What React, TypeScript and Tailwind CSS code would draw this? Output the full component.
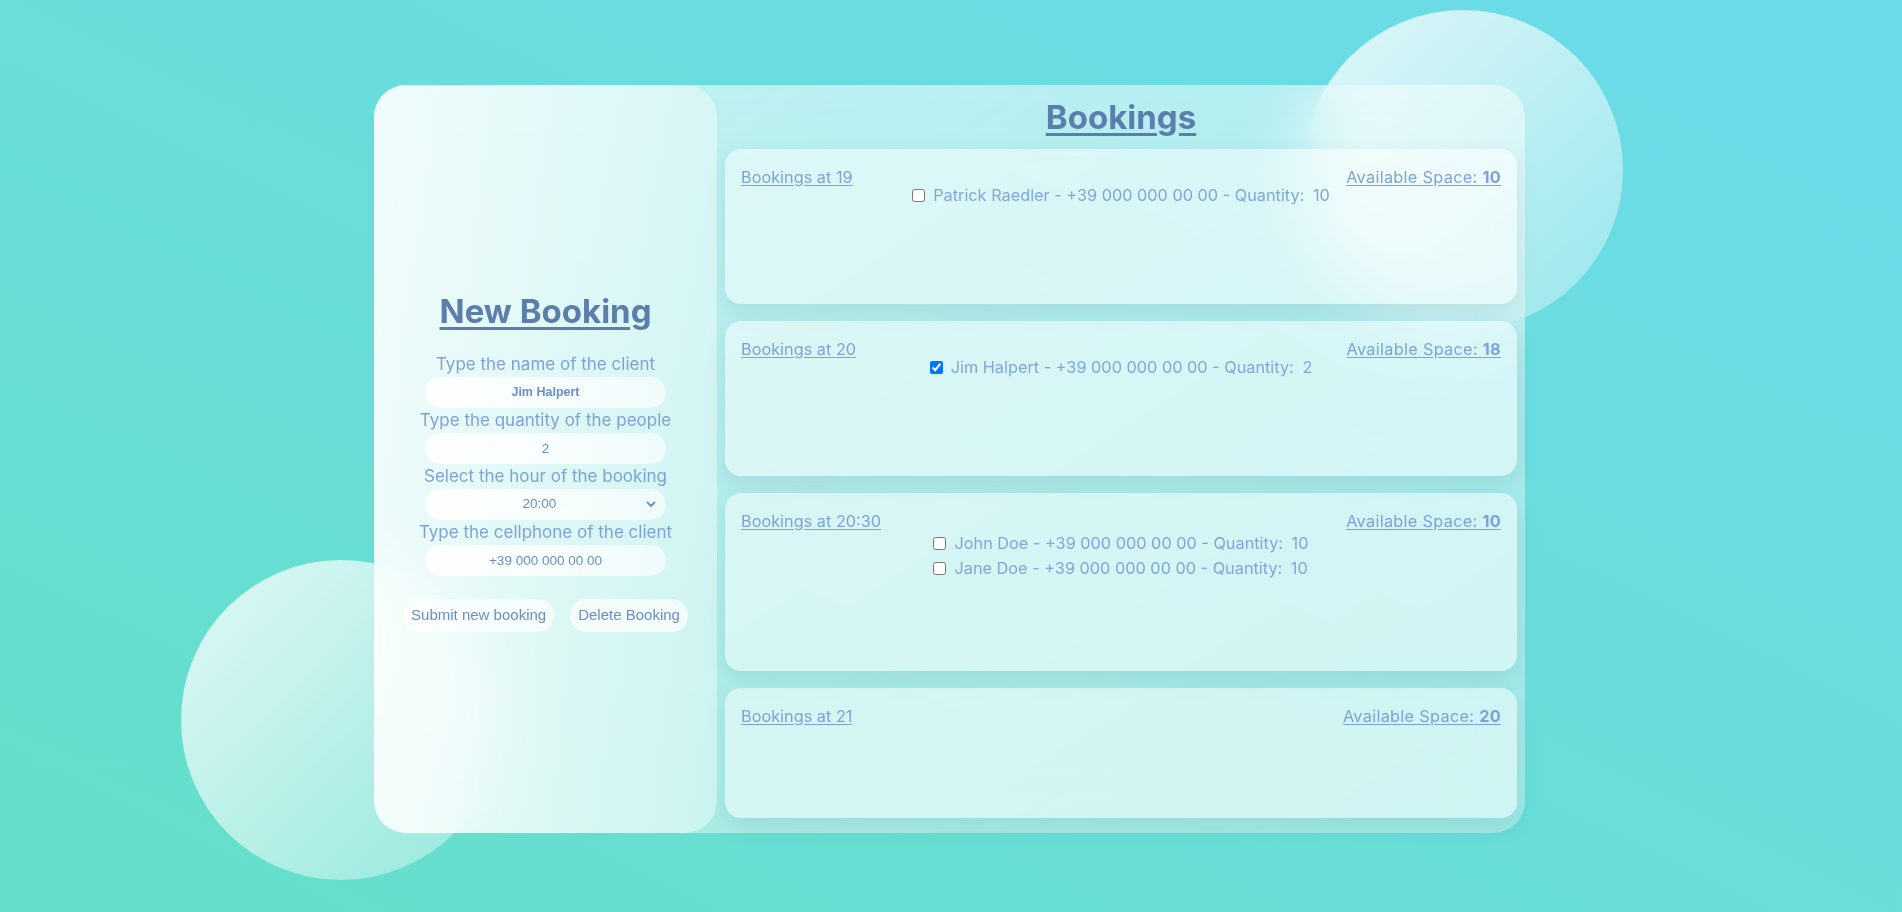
import React from "react";

type Item = { name: string; qty: number; checked: boolean };
type Slot = { hour: string; space: number; items: Item[] };

const slots: Slot[] = [
  { hour: "19", space: 10, items: [{ name: "Patrick Raedler", qty: 10, checked: false }] },
  { hour: "20", space: 18, items: [{ name: "Jim Halpert", qty: 2, checked: true }] },
  {
    hour: "20:30",
    space: 10,
    items: [
      { name: "John Doe", qty: 10, checked: false },
      { name: "Jane Doe", qty: 10, checked: false },
    ],
  },
  { hour: "21", space: 20, items: [] },
];

const poppins = "font-['Inter',sans-serif]";

function Field({ label, children }: { label: string; children: React.ReactNode }) {
  return (
    <div className="flex flex-col items-center">
      <div className="text-[17px] leading-[25px] text-[#7ea2d5] whitespace-nowrap">{label}</div>
      {children}
    </div>
  );
}

const inputCls =
  "w-[241px] h-[31px] rounded-full bg-linear-to-r from-[rgba(255,255,255,0.95)] to-[rgba(255,255,255,0.6)] text-center text-[#6a8ec6] font-['Liberation_Sans',Arial,sans-serif] outline-none border-0";

export default function App() {
  return (
    <div
      className={`relative w-full h-[912px] overflow-hidden bg-linear-to-tr from-[#65dfc9] to-[#6cdbeb] ${poppins}`}
    >
      <div className="absolute left-[1303px] top-[10px] w-[320px] h-[320px] rounded-full bg-linear-to-br from-[rgba(255,255,255,0.8)] to-[rgba(255,255,255,0.3)]" />
      <div className="absolute left-[181px] top-[560px] w-[320px] h-[320px] rounded-full bg-linear-to-br from-[rgba(255,255,255,0.8)] to-[rgba(255,255,255,0.3)]" />

      <div className="relative z-10 flex pl-[374px] pt-[85px]">
        <div className="flex w-[1151px] h-[748px] rounded-[32px] bg-linear-to-br from-[rgba(255,255,255,0.6)] to-[rgba(255,255,255,0.35)] backdrop-blur-[32px]">
          {/* Left panel */}
          <div className="w-[343px] h-full rounded-[32px] bg-linear-to-r from-[rgba(255,255,255,0.75)] to-[rgba(255,255,255,0.4)] flex flex-col items-center justify-center">
            <h1 className="text-[33px] leading-[48px] font-bold text-[#5b7eab] underline decoration-[3px] underline-offset-[4px]">
              New Booking
            </h1>
            <div className="mt-[17px] flex flex-col items-center">
              <Field label="Type the name of the client">
                <input className={`${inputCls} text-[12.5px] font-bold`} defaultValue="Jim Halpert" />
              </Field>
              <Field label="Type the quantity of the people">
                <input className={`${inputCls} text-[13.5px]`} defaultValue="2" />
              </Field>
              <Field label="Select the hour of the booking">
                <div className="relative">
                  <select className={`${inputCls} text-[13.5px] appearance-none pl-[8px] pr-[20px]`} defaultValue="20:00">
                    <option>19:00</option>
                    <option>20:00</option>
                    <option>20:30</option>
                    <option>21:00</option>
                  </select>
                  <svg
                    className="absolute right-[10px] top-[12px] pointer-events-none"
                    width="10"
                    height="7"
                    viewBox="0 0 10 7"
                    fill="none"
                  >
                    <path d="M1.5 1.5 L5 5 L8.5 1.5" stroke="#6a8ec6" strokeWidth="1.8" strokeLinecap="round" strokeLinejoin="round" />
                  </svg>
                </div>
              </Field>
              <Field label="Type the cellphone of the client">
                <input className={`${inputCls} text-[13.5px]`} defaultValue="+39 000 000 00 00" />
              </Field>
            </div>
            <div className="mt-[23px] flex gap-[16px]">
              <button className="h-[33px] px-[8px] rounded-full bg-[rgba(255,255,255,0.7)] text-[15px] text-[#6a8ec6] font-['Liberation_Sans',Arial,sans-serif]">
                Submit new booking
              </button>
              <button className="h-[33px] px-[8px] rounded-full bg-[rgba(255,255,255,0.7)] text-[15px] text-[#6a8ec6] font-['Liberation_Sans',Arial,sans-serif]">
                Delete Booking
              </button>
            </div>
          </div>

          {/* Right column */}
          <div className="flex-1 flex flex-col pl-[8px] pr-[8px]">
            <div className="h-[64px] flex items-center justify-center">
              <h2 className="text-[33px] leading-[48px] font-bold text-[#5b7eab] underline decoration-[3px] underline-offset-[4px]">
                Bookings
              </h2>
            </div>
            <div className="flex flex-col gap-[17px]">
              {slots.map((s) => (
                <div
                  key={s.hour}
                  className="grid grid-cols-[1fr_auto_1fr] p-[16px] rounded-2xl bg-[rgba(255,255,255,0.5)] shadow-[0_8px_24px_rgba(0,0,0,0.08)]"
                >
                  <div className="justify-self-start text-[16.3px] leading-[24px] text-[#7ea2d8] underline underline-offset-2 whitespace-nowrap">
                    Bookings at {s.hour}
                  </div>
                  <div
                    className={
                      s.items.length > 1
                        ? "pt-[22px] pb-[74px] flex flex-col"
                        : "pt-[18px] pb-[80px] flex flex-col"
                    }
                  >
                    {s.items.map((it) => (
                      <div key={it.name} className="flex items-center h-[25px] text-[16.3px] text-[#82a6d9] whitespace-nowrap">
                        <input
                          type="checkbox"
                          defaultChecked={it.checked}
                          className="m-0 mr-[8px] w-[13px] h-[13px]"
                        />
                        <span>
                          {it.name} - +39 000 000 00 00 - Quantity: <span className="ml-[4px]">{it.qty}</span>
                        </span>
                      </div>
                    ))}
                  </div>
                  <div className="justify-self-end text-[16.3px] leading-[24px] text-[#7ea2d8] underline underline-offset-2 whitespace-nowrap tracking-[0.3px]">
                    Available Space: <b className="font-bold">{s.space}</b>
                  </div>
                </div>
              ))}
            </div>
          </div>
        </div>
      </div>
    </div>
  );
}
